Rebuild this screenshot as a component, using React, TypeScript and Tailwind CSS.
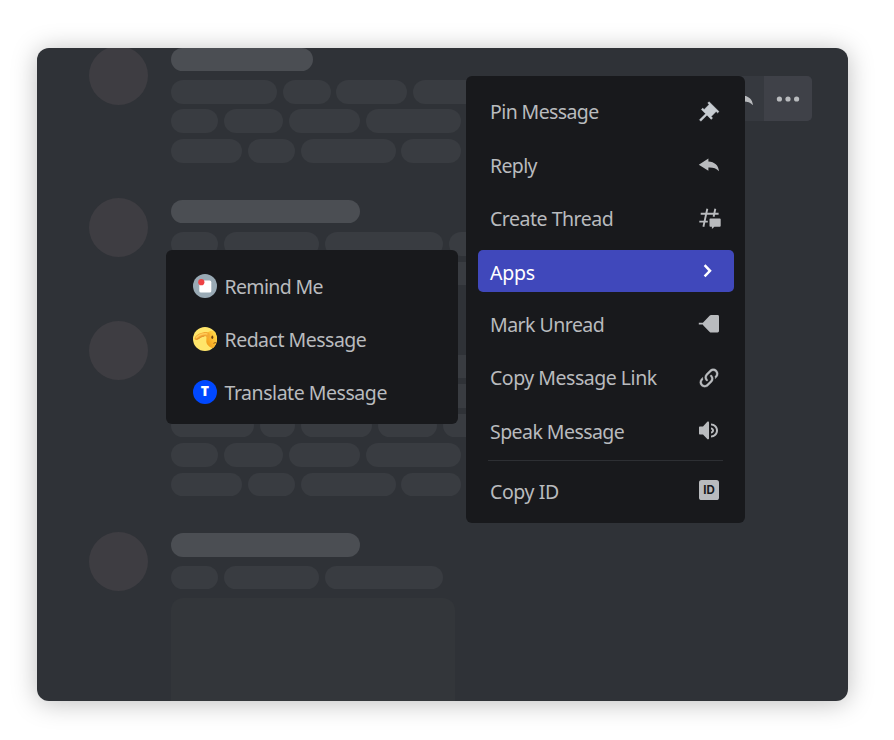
import type { ReactNode } from 'react';

type Message = { title: number; rows: number[][]; embed?: boolean };

const messages: Message[] = [
  {
    title: 141.7,
    rows: [
      [106.3, 47.2, 70.9, 94.5],
      [47.2, 59.1, 70.9, 94.5],
      [70.9, 47.2, 94.5, 59.1],
    ],
  },
  {
    title: 189,
    rows: [
      [47.2, 94.5, 118.1, 47.2],
      [106.3, 94.5, 118.1],
    ],
  },
  {
    title: 141.7,
    rows: [
      [106.3, 94.5, 118.1],
      [106.3, 94.5, 118.1],
      [82.7, 35.4, 70.9, 59.1, 70.9],
      [47.2, 59.1, 70.9, 94.5],
      [70.9, 47.2, 94.5, 59.1],
    ],
  },
  { title: 189, rows: [[47.2, 94.5, 118.1]], embed: true },
];

function Skeleton({ title, rows, embed }: Message) {
  return (
    <div className="flex shrink-0 items-start gap-[23.3px]">
      <div className="size-[59.1px] shrink-0 rounded-full bg-[#3e3d42]" />
      <div className="flex flex-col gap-[5.9px] pt-[1.7px]">
        <div className="mb-[3px] h-[23.6px] rounded-full bg-[#4b4e53]" style={{ width: title }} />
        {rows.map((row, i) => (
          <div key={i} className="flex gap-[5.95px]">
            {row.map((width, j) => (
              <div key={j} className="h-[23.6px] shrink-0 rounded-full bg-[#393c41]" style={{ width }} />
            ))}
          </div>
        ))}
        {embed && <div className="mt-[3px] h-[150px] w-[283.5px] rounded-xl bg-[#33363a]" />}
      </div>
    </div>
  );
}

function Icon({ children }: { children: ReactNode }) {
  return (
    <svg viewBox="0 0 24 24" className="size-6 shrink-0 fill-current">
      {children}
    </svg>
  );
}

const replyPath = 'M1.8 11.7 11.4 5.6V8.4C17.5 8.8 21.5 12 22 18.3 19 15.1 16 14.3 11.4 14.5V17.8Z';

const icons = {
  pin: (
    <path
      transform="translate(0 -.4)"
      fill="#c7ccd1"
      stroke="#c7ccd1"
      strokeWidth=".4"
      d="M22 12L12.101 2.101L10.686 3.514L12.101 4.929L7.151 9.878V9.88L5.736 8.465L4.322 9.88L8.565 14.122L2.4 20.2L3.9 21.7L9.979 15.536L14.222 19.778L15.636 18.364L14.222 16.95L19.171 12L20.586 13.414L22 12Z"
    />
  ),
  reply: <path d={replyPath} />,
  thread: (
    <>
      <path d="M10.3 2.7 6.4 20.7M18.3 2.7 16.6 10.7M3.7 7.8H21.6M2.3 15.6H10.8" fill="none" stroke="currentColor" strokeWidth="1.9" />
      <path d="M13.3 12.4H22.8Q23.7 12.4 23.7 13.3V19.8Q23.7 20.7 22.8 20.7H17.4L14.9 23.1V20.7H13.3Q12.5 20.7 12.5 19.8V13.3Q12.5 12.4 13.3 12.4Z" />
    </>
  ),
  chevron: <path d="M7.6 6.2 13 11.8 7.6 17.4" fill="none" stroke="currentColor" strokeWidth="2.5" />,
  unread: <path d="M1.8 10.8H5.9L12.8 3.4Q13.2 3 14 3H20.6Q22 3 22 4.4V19.1Q22 20.5 20.6 20.5H14Q13.2 20.5 12.7 20L6.6 13.8Q5.9 12.9 5.8 12.6H1.8Z" />,
  link: (
    <path
      stroke="currentColor"
      strokeWidth=".3"
      d="M10.59,13.41C11,13.8 11,14.44 10.59,14.83C10.2,15.22 9.56,15.22 9.17,14.83C7.22,12.88 7.22,9.71 9.17,7.76V7.76L12.71,4.22C14.66,2.27 17.83,2.27 19.78,4.22C21.73,6.17 21.73,9.34 19.78,11.29L18.29,12.78C18.3,11.96 18.17,11.14 17.89,10.36L18.36,9.88C19.54,8.71 19.54,6.81 18.36,5.64C17.19,4.46 15.29,4.46 14.12,5.64L10.59,9.17C9.41,10.34 9.41,12.24 10.59,13.41M13.41,9.17C13.8,8.78 14.44,8.78 14.83,9.17C16.78,11.12 16.78,14.29 14.83,16.24V16.24L11.29,19.78C9.34,21.73 6.17,21.73 4.22,19.78C2.27,17.83 2.27,14.66 4.22,12.71L5.71,11.22C5.7,12.04 5.83,12.86 6.11,13.65L5.64,14.12C4.46,15.29 4.46,17.19 5.64,18.36C6.81,19.54 8.71,19.54 9.88,18.36L13.41,14.83C14.59,13.66 14.59,11.76 13.41,10.59C13,10.2 13,9.56 13.41,9.17Z"
    />
  ),
  speak: (
    <path
      transform="translate(0 -.6)"
      d="M11.383 3.079C11.009 2.925 10.579 3.01 10.293 3.296L6 8.002H3C2.45 8.002 2 8.453 2 9.002V15.002C2 15.552 2.45 16.002 3 16.002H6L10.293 20.71C10.579 20.996 11.009 21.082 11.383 20.927C11.757 20.772 12 20.407 12 20.002V4.002C12 3.599 11.757 3.232 11.383 3.079ZM14 5.002V7.002C16.757 7.002 19 9.246 19 12.002C19 14.759 16.757 17.002 14 17.002V19.002C17.86 19.002 21 15.863 21 12.002C21 8.143 17.86 5.002 14 5.002ZM14 9.002C15.654 9.002 17 10.349 17 12.002C17 13.657 15.654 15.002 14 15.002V13.002C14.551 13.002 15 12.553 15 12.002C15 11.451 14.551 11.002 14 11.002V9.002Z"
    />
  ),
  id: (
    <>
      <rect x="2" y="1" width="20" height="20" rx="2.6" />
      <text x="12" y="14.8" textAnchor="middle" fontSize="11.5" fontWeight="700" fontFamily="Inter, sans-serif" fill="#18191c">
        ID
      </text>
    </>
  ),
};

type Entry = { label: string; icon: keyof typeof icons; tracking: string; active?: boolean };

const entries: Entry[] = [
  { label: 'Pin Message', icon: 'pin', tracking: 'tracking-[-0.6px]' },
  { label: 'Reply', icon: 'reply', tracking: 'tracking-[-0.65px]' },
  { label: 'Create Thread', icon: 'thread', tracking: 'tracking-[-0.48px]' },
  { label: 'Apps', icon: 'chevron', tracking: 'tracking-[-0.25px]', active: true },
  { label: 'Mark Unread', icon: 'unread', tracking: 'tracking-[-0.53px]' },
  { label: 'Copy Message Link', icon: 'link', tracking: 'tracking-[-0.48px]' },
  { label: 'Speak Message', icon: 'speak', tracking: 'tracking-[-0.55px]' },
];

function MenuItem({ label, icon, tracking, active }: Entry) {
  return (
    <div
      className={`flex h-[41.5px] items-center justify-between rounded-[5px] pr-[13px] pl-3 ${
        active ? 'bg-[#4048bb] text-white' : ''
      }`}
    >
      <span className={`whitespace-nowrap ${active ? 'pt-[3px]' : 'pt-[1.6px]'} ${tracking}`}>{label}</span>
      <Icon>{icons[icon]}</Icon>
    </div>
  );
}

function RemindLogo() {
  return (
    <Icon>
      <circle cx="12" cy="12" r="12" fill="#99aab5" />
      <rect x="6.3" y="6.6" width="12" height="12" rx="1.6" fill="#fff" />
      <circle cx="8.3" cy="8.2" r="3.1" fill="#ed4245" />
    </Icon>
  );
}

function RedactLogo() {
  return (
    <Icon>
      <defs>
        <clipPath id="face-clip">
          <circle cx="12" cy="12" r="12" />
        </clipPath>
        <linearGradient id="face-skin" x1=".1" y1=".9" x2=".9" y2=".2">
          <stop offset="0" stopColor="#ef9a1c" />
          <stop offset=".5" stopColor="#fcb92d" />
          <stop offset="1" stopColor="#ffdc4e" />
        </linearGradient>
      </defs>
      <g clipPath="url(#face-clip)">
        <rect width="24" height="24" fill="#ffe56a" />
        <path d="M13.5 8C15 3 20 3 25 5V21C20 22.5 14.5 20 13.3 15Z" fill="url(#face-skin)" />
        <path d="M1.8 10.5C4 7 10 4.6 14.5 5.2 17.5 5.8 17.2 9.5 15.6 12.5 14.2 10 12.8 8.6 10.5 9.2 7.5 10 6 12.3 3.5 13 1.8 13.2 1 12 1.8 10.5Z" fill="#f3a932" />
        <path d="M2.9 10.9C6 7.8 10 6.3 14.4 6.9" fill="none" stroke="#ffcb58" strokeWidth="1.5" />
        <path d="M3.6 12.5C6.5 11.6 8 9.2 11.5 9.2" fill="none" stroke="#d9852a" strokeWidth=".8" />
        <ellipse cx="19.3" cy="10.2" rx="1" ry="1.7" fill="#6b4313" />
        <path d="M20.5 16.3Q22.2 15.2 24 15.9" fill="none" stroke="#8b5414" strokeWidth="1" />
      </g>
    </Icon>
  );
}

function TranslateLogo() {
  return (
    <Icon>
      <circle cx="12" cy="12" r="12" fill="#0048ff" />
      <text x="12" y="16.4" textAnchor="middle" fontSize="14" fontWeight="800" fontFamily="'Open Sans', sans-serif" fill="#fff">
        T
      </text>
    </Icon>
  );
}

const apps = [
  { label: 'Remind Me', logo: <RemindLogo />, tracking: 'tracking-[-0.65px]' },
  { label: 'Redact Message', logo: <RedactLogo />, tracking: 'tracking-[-0.5px]' },
  { label: 'Translate Message', logo: <TranslateLogo />, tracking: 'tracking-[-0.46px]' },
];

export default function App() {
  return (
    <div className="h-[740px] w-[894px] overflow-hidden bg-white pt-[47.5px] pl-[37px] font-['Noto_Sans',sans-serif] text-[19.5px] leading-6 text-[#b9bbbe]">
      <main className="relative h-[653.5px] w-[811.4px] rounded-xl bg-[#2f3237] shadow-[0_2px_26px_rgba(0,0,0,0.26)]">
        <div className="flex h-full flex-col gap-[35.4px] overflow-hidden rounded-xl pl-[51.7px]">
          <div className="-mt-[1.7px]">
            <Skeleton {...messages[0]} />
          </div>
          {messages.slice(1).map((message, i) => (
            <Skeleton key={i} {...message} />
          ))}
        </div>

        <div className="absolute top-[28.5px] right-[36.4px] flex h-[45.3px] overflow-hidden rounded-[5px] bg-[#36393f]">
          <div className="flex w-12 items-center justify-center pl-[5px]">
            <Icon>
              <path d={replyPath} />
            </Icon>
          </div>
          <div className="flex w-12 items-center justify-center gap-[3.4px] bg-[#3f4148]">
            <svg viewBox="0 0 24 6" className="h-1.5 w-6 fill-current">
              <circle cx="3.4" cy="3" r="2.6" />
              <circle cx="12" cy="3" r="2.6" />
              <circle cx="20.6" cy="3" r="2.6" />
            </svg>
          </div>
        </div>

        <nav className="absolute top-[28.5px] left-[429px] flex h-[446.8px] w-[279px] flex-col gap-[11.7px] rounded-md bg-[#18191c] pt-[14.9px] pr-[10.6px] pl-[12px]">
          {entries.map((entry) => (
            <MenuItem key={entry.label} {...entry} />
          ))}
          <hr className="-mt-[3.2px] mr-[11px] ml-[9.5px] border-[#2d2f33]" />
          <div className="-mt-[2px]">
            <MenuItem label="Copy ID" icon="id" tracking="tracking-[-0.4px]" />
          </div>
        </nav>

        <nav className="absolute top-[202.5px] left-[129px] flex h-[174px] w-[292px] flex-col gap-[29.1px] rounded-md bg-[#18191c] pt-[23.5px] pl-[27px]">
          {apps.map(({ label, logo, tracking }) => (
            <div key={label} className="flex h-6 items-center gap-[7.5px]">
              {logo}
              <span className={`pt-[2px] whitespace-nowrap ${tracking}`}>{label}</span>
            </div>
          ))}
        </nav>
      </main>
    </div>
  );
}
